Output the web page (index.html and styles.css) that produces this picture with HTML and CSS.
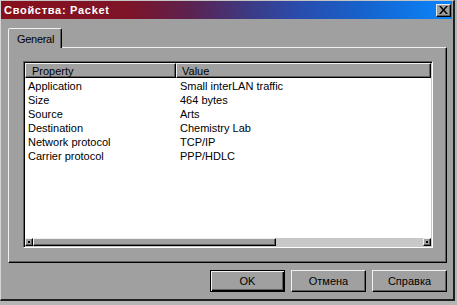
FILE: index.html
```html
<!DOCTYPE html>
<html lang="ru">
<head>
  <meta charset="UTF-8">
  <title>Свойства: Packet</title>
  <link rel="stylesheet" href="styles.css">
</head>
<body>
  <div class="window">
    <div class="titlebar">
      <span class="title">Свойства: Packet</span>
      <button class="close-btn" aria-label="Закрыть">
        <svg width="9" height="8" viewBox="0 0 9 8"><path d="M0 0h2l2.5 3 2.5-3h2l-3.5 4 3.5 4h-2l-2.5-3-2.5 3h-2l3.5-4z" fill="#000"/></svg>
      </button>
    </div>

    <div class="tabs">
      <div class="tab">General</div>
    </div>

    <div class="panel">
      <div class="listview">
        <div class="list-header">
          <div class="col-head col-prop">Property</div>
          <div class="col-head col-val">Value</div>
        </div>
        <div class="list-body">
          <div class="row"><span class="cell">Application</span><span class="cell val">Small interLAN traffic</span></div>
          <div class="row"><span class="cell">Size</span><span class="cell val">464 bytes</span></div>
          <div class="row"><span class="cell">Source</span><span class="cell val">Arts</span></div>
          <div class="row"><span class="cell">Destination</span><span class="cell val">Chemistry Lab</span></div>
          <div class="row"><span class="cell">Network protocol</span><span class="cell val">TCP/IP</span></div>
          <div class="row"><span class="cell">Carrier protocol</span><span class="cell val">PPP/HDLC</span></div>
        </div>
        <div class="hscroll">
          <div class="sb-btn"><i></i></div>
          <div class="sb-thumb"></div>
          <div class="sb-track"></div>
          <div class="sb-btn"><i></i></div>
        </div>
      </div>
    </div>

    <div class="buttons">
      <button class="btn default">OK</button>
      <button class="btn">Отмена</button>
      <button class="btn">Справка</button>
    </div>
  </div>
</body>
</html>
```

FILE: styles.css
```css
/* Окно свойств в стиле Windows 9x */
body {
  margin: 0;
  background-color: #b4b4b4;
  font-family: "Liberation Sans", Arial, sans-serif;
  font-size: 11px;
  color: #000;
}

.window {
  width: 452px;
  height: 298px;
  background-color: #a0a0a0;
  border-top: 1px solid #c4c4c4;
  border-left: 1px solid #d4d4d4;
  border-right: 2px solid #202020;
  border-bottom: 2px solid #202020;
  display: flex;
  flex-direction: column;
}

.titlebar {
  height: 18px;
  margin-right: 1px;
  padding-left: 3px;
  display: flex;
  align-items: center;
  justify-content: space-between;
  background: linear-gradient(to right, #88101c 0%, #7e1428 28%, #5c2250 42%, #3c3a84 55%, #2a4cac 66%, #1662cc 80%, #0a86fc 100%);
}

.title {
  color: #fff;
  font-weight: bold;
  font-size: 11px;
  letter-spacing: 0.7px;
}

.close-btn {
  width: 15px;
  height: 13px;
  margin-right: 1px;
  padding: 0;
  display: flex;
  align-items: center;
  justify-content: center;
  background-color: #a0a0a0;
  border: 1px solid;
  border-color: #e8e8e8 #000 #000 #e8e8e8;
  box-shadow: inset -1px -1px #606060;
}

.tabs {
  display: flex;
  padding: 9px 0 0 7px;
}

.tab {
  height: 19px;
  padding: 0 7px 0 8px;
  display: flex;
  align-items: center;
  border: 1px solid;
  border-bottom: none;
  border-color: #f0f0f0 #000 transparent #f0f0f0;
  border-radius: 2px 2px 0 0;
  box-shadow: inset -1px 0 #606060;
  background-color: #a0a0a0;
  margin-bottom: -1px;
  position: relative;
  z-index: 1;
  letter-spacing: -0.3px;
}

.panel {
  height: 187px;
  margin: 0 6px 0 7px;
  padding: 13px 13px 14px 14px;
  border: 1px solid;
  border-color: #f0f0f0 #000 #000 #f0f0f0;
  box-shadow: inset -1px -1px #606060;
  display: flex;
}

.listview {
  flex: 1;
  display: flex;
  flex-direction: column;
  border: 1px solid;
  border-color: #606060 #fff #fff #606060;
  box-shadow: inset 1px 1px #000, inset -1px -1px #c8c8c8;
  padding: 1px;
  background-color: #fff;
}

.list-header {
  display: flex;
  height: 15px;
}

.col-head {
  background-color: #a0a0a0;
  border: 1px solid;
  border-color: #f0f0f0 #000 #000 #f0f0f0;
  box-shadow: inset -1px -1px #606060;
  display: flex;
  align-items: center;
  box-sizing: border-box;
}

.col-prop {
  width: 151px;
  padding-left: 6px;
}

.col-val {
  flex: 1;
  padding-left: 5px;
}

.list-body {
  flex: 1;
  padding-top: 1px;
}

.row {
  display: flex;
  height: 14px;
  align-items: center;
}

.cell {
  width: 151px;
  padding-left: 3px;
  box-sizing: border-box;
  white-space: nowrap;
}

.cell.val {
  width: auto;
  padding-left: 4px;
}

.hscroll {
  display: flex;
  height: 8px;
  background-color: #c8c8c8;
}

.sb-btn,
.sb-thumb {
  background-color: #a0a0a0;
  border: 1px solid;
  border-color: #f0f0f0 #000 #000 #f0f0f0;
  box-shadow: inset -1px -1px #606060;
  box-sizing: border-box;
}

.sb-btn {
  width: 8px;
  display: flex;
  align-items: center;
  justify-content: center;
}

.sb-btn i {
  width: 2px;
  height: 2px;
  background-color: #000;
}

.sb-thumb {
  width: 243px;
}

.sb-track {
  flex: 1;
}

.buttons {
  display: flex;
  justify-content: flex-end;
  gap: 6px;
  padding: 7px 6px 0 0;
}

.btn {
  width: 75px;
  height: 22px;
  padding: 0;
  font-family: "Liberation Sans", Arial, sans-serif;
  font-size: 11px;
  color: #000;
  background-color: #a0a0a0;
  border: 1px solid;
  border-color: #f0f0f0 #000 #000 #f0f0f0;
  box-shadow: inset -1px -1px #606060;
}

.btn.default {
  border: 1px solid #000;
  box-shadow: inset 1px 1px #f0f0f0, inset -1px -1px #000, inset -2px -2px #606060;
}
```
